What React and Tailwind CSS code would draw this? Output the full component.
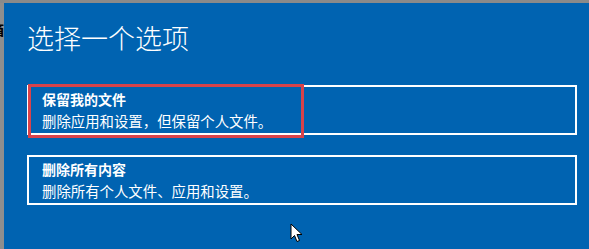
const font = { fontFamily: '"Microsoft YaHei", "Noto Sans CJK SC", sans-serif' };

const options = [
  { title: "保留我的文件", desc: "删除应用和设置，但保留个人文件。", marked: true },
  { title: "删除所有内容", desc: "删除所有个人文件、应用和设置。" },
];

const Cursor = () => (
  <svg width="14" height="20" viewBox="0 0 14 20" className="absolute left-[290px] top-[223px]">
    <path d="M1 1 L1 16 L4.5 12.5 L7 18.5 L9.5 17.5 L7 11.5 L12 11.5 Z" fill="#fff" stroke="#000" strokeWidth="1" />
  </svg>
);

export default function App() {
  return (
    <div className="relative w-[589px] h-[249px] flex flex-col overflow-hidden bg-[#0063b1]" style={font}>
      <div className="h-[3px] bg-[#8a8a8a]" />
      <div className="flex flex-1">
        <div className="relative w-[4px] bg-[#8e8e8e]">
          <span className="absolute left-[-10px] top-[16px] text-[14px] font-bold text-black">箱</span>
        </div>
        <div className="flex-1 pl-[23px] pr-[10px] pt-[17px]">
          <h1 className="text-[27px] leading-[36px] font-light text-white">选择一个选项</h1>
          <div className="mt-[29px] flex flex-col gap-[20px]">
            {options.map((o) => (
              <div key={o.title} className="relative w-[550px] h-[50px] border-2 border-white pl-[13px] pt-[1px] text-white">
                <div className="text-[14px] leading-[22px] font-bold">{o.title}</div>
                <div className="text-[14.4px] leading-[22px]">{o.desc}</div>
                {o.marked && (
                  <div className="absolute left-[-1px] top-[-3px] w-[276px] h-[54px] border-[3px] border-[#d8434b]" />
                )}
              </div>
            ))}
          </div>
        </div>
      </div>
      <Cursor />
    </div>
  );
}
